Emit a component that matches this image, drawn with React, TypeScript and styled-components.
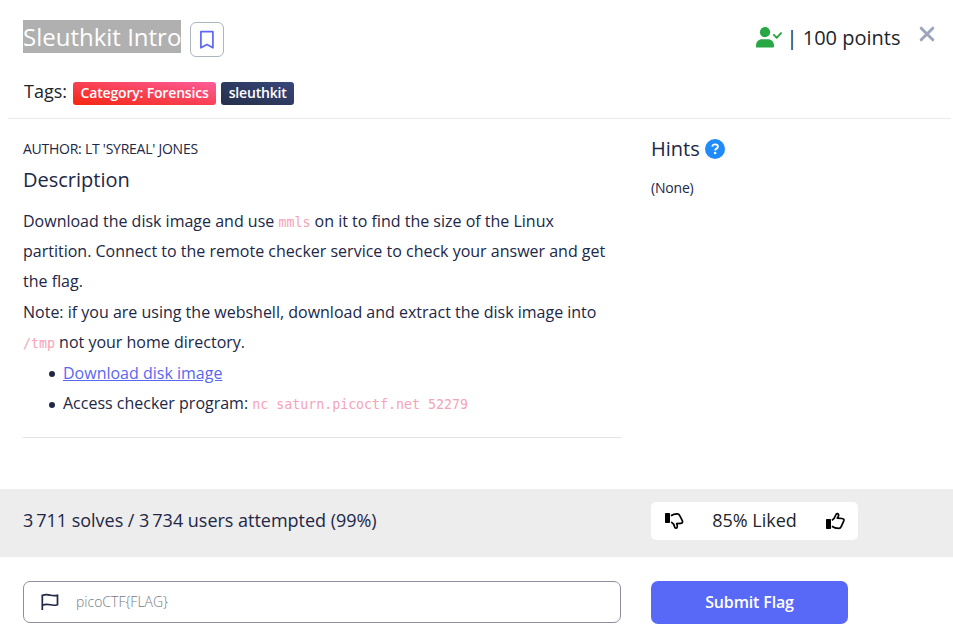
import React from "react";
import styled, { createGlobalStyle } from "styled-components";

const GlobalStyle = createGlobalStyle`
  *, *::before, *::after { box-sizing: border-box; }
  body {
    margin: 0;
    background: #fff;
    color: #212746;
    font-family: "Open Sans", "Noto Sans", sans-serif;
    font-size: 16px;
    overflow: hidden;
  }
`;

const Dialog = styled.main`
  width: 953px;
  height: 638px;
  display: flex;
  flex-direction: column;
`;

const Header = styled.header`
  height: 119px;
  margin: 0 2px 0 8px;
  padding: 20px 16.5px 0 15px;
  border-bottom: 1px solid #e9ecef;
  color: #212529;
`;

const TitleRow = styled.div`
  display: flex;
  align-items: flex-start;
  height: 62px;
`;

const Title = styled.h1`
  margin: 0;
  height: 33px;
  font-size: 24px;
  line-height: 33px;
  font-weight: 400;
  color: #fff;
  background: #b0b0b0;
  white-space: nowrap;
`;

const BookmarkButton = styled.button`
  display: flex;
  align-items: center;
  justify-content: center;
  width: 34px;
  height: 35px;
  margin: 2px 0 0 9px;
  padding: 0;
  border: 1px solid #adb5bd;
  border-radius: 6px;
  background: #fff;
`;

const Points = styled.div`
  display: flex;
  margin-left: auto;
  font-size: 20px;
  line-height: 35px;
  white-space: pre;

  svg { margin: 6px 4.5px 0 0; }
`;

const CloseButton = styled.button`
  display: flex;
  margin: 6px 0 0 18px;
  padding: 0;
  border: 0;
  background: none;
`;

const TagRow = styled.div`
  display: flex;
  align-items: flex-start;
  height: 23px;
`;

const TagLabel = styled.span`
  width: 50px;
  padding-left: 1px;
  font-size: 18px;
  line-height: 19px;
`;

const Tag = styled.span<{ $tone: "red" | "navy" }>`
  height: 23px;
  margin-right: 5px;
  padding: 0 7.5px;
  border-radius: 3px;
  font-size: 14px;
  line-height: 22px;
  letter-spacing: -0.17px;
  font-weight: 600;
  color: #fff;
  white-space: nowrap;
  background: ${({ $tone }) =>
    $tone === "red"
      ? "linear-gradient(to top right, #f5260f, #fc5c9a)"
      : "linear-gradient(to top right, #262e48, #36477a)"};
`;

const Body = styled.section`
  display: grid;
  grid-template-columns: 598px 1fr;
  column-gap: 30px;
  height: 370px;
  padding: 19px 23px 0 23px;
`;

const Details = styled.article`
  height: 300px;
  border-bottom: 1px solid #e3e4e6;
`;

const Author = styled.h6`
  margin: 0;
  font-size: 14px;
  line-height: 22px;
  letter-spacing: -0.25px;
  font-weight: 400;
`;

const SectionTitle = styled.h2`
  display: flex;
  align-items: center;
  gap: 5px;
  margin: 0;
  font-size: 20px;
  line-height: 24px;
  font-weight: 400;
`;

const DescriptionTitle = styled(SectionTitle)`
  margin-top: 8px;
`;

const HintsTitle = styled(SectionTitle)`
  margin-top: -1px;
`;

const Paragraph = styled.p`
  margin: 0;
  line-height: 30.4px;

  ${DescriptionTitle} + & { margin-top: 13.65px; }
`;

const Code = styled.code`
  font-family: "DejaVu Sans Mono", monospace;
  font-size: 13.28px;
  line-height: 1;
  color: #f5a3b7;
`;

const List = styled.ul`
  margin: 0;
  padding-left: 40px;
  line-height: 30.4px;
  list-style: none;
`;

const ListItem = styled.li`
  &::before {
    content: "";
    display: inline-block;
    width: 6px;
    height: 6px;
    margin: 0 8px 0 -14px;
    border-radius: 50%;
    background: currentColor;
    vertical-align: 1.5px;
  }
`;

const Link = styled.a`
  color: #5a67f2;
  text-decoration: underline;
`;

const HintText = styled.p`
  margin: 16px 0 0;
  font-size: 14px;
  line-height: 22px;
  letter-spacing: -0.2px;
`;

const StatsBar = styled.section`
  display: flex;
  align-items: center;
  height: 68px;
  padding: 0 23px;
  background: #ededed;
`;

const Solves = styled.div`
  width: 628px;
  margin-top: -6px;
  font-size: 18px;
  letter-spacing: -0.02px;
  white-space: nowrap;
`;

const Rating = styled.div`
  display: flex;
  align-items: center;
  justify-content: space-between;
  width: 207px;
  height: 38px;
  margin-top: -4px;
  padding: 0 13px;
  border-radius: 5px;
  background: #fff;
  color: #212529;
  font-size: 18px;

  span { margin-top: -2px; }
`;

const Form = styled.form`
  display: flex;
  gap: 30px;
  padding: 24px 23px 0;
`;

const Field = styled.label`
  display: flex;
  align-items: center;
  width: 598px;
  height: 42px;
  padding-left: 17px;
  border: 1px solid #8d8fa1;
  border-radius: 7px;
`;

const FlagInput = styled.input`
  flex: 1;
  min-width: 0;
  margin: 0 12px 0 17px;
  padding: 0;
  border: 0;
  outline: 0;
  background: none;
  font: 300 14px/22px "Open Sans", sans-serif;
  color: #212746;

  &::placeholder { color: #767985; opacity: 1; }
`;

const SubmitButton = styled.button`
  width: 197px;
  height: 43px;
  padding: 0 0 1px;
  border: 0;
  border-radius: 7px;
  background: #5969f7;
  color: #fff;
  font: 600 16px/24px "Open Sans", sans-serif;
  letter-spacing: -0.15px;
`;

const BookmarkIcon = () => (
  <svg width="16" height="20" viewBox="0 0 16 20" fill="none" stroke="#5a67f7" strokeWidth="1.700" strokeLinejoin="round">
    <path d="M1.900 1.600h12v16.200l-6-3.300-6 3.300z" />
  </svg>
);

const SolvedIcon = () => (
  <svg width="26" height="22" viewBox="0 0 26 22" fill="#28a745">
    <circle cx="9" cy="6.2" r="5.1" />
    <path d="M0 21v-1.5C0 15.6 2.7 13.2 6 13.2h6c3.3 0 6 2.4 6 6.3V20c0 1-.5 1.500-1.400 1.500H1.400C.5 21.500 0 21.400 0 21z" />
    <path d="m17.900 8.900 2.800 2.900 4.300-4.700" fill="none" stroke="#28a745" strokeWidth="1.900" strokeLinecap="round" strokeLinejoin="round" />
  </svg>
);

const CloseIcon = () => (
  <svg width="16" height="16" viewBox="0 0 16 16" stroke="#9da4bd" strokeWidth="3" strokeLinecap="round">
    <path d="m2.200 2.200 11.600 11.600m0-11.600L2.200 13.800" />
  </svg>
);

const HelpIcon = () => (
  <svg width="20" height="20" viewBox="0 0 20 20" fill="none">
    <circle cx="10" cy="10" r="10" fill="#1f8bfa" />
    <path d="M7.300 7.700c.2-1.600 1.200-2.300 2.800-2.300 1.700 0 2.800.9 2.800 2.300 0 2-2.800 1.800-2.800 3.800" stroke="#fff" strokeWidth="1.900" />
    <circle cx="10.100" cy="14.100" r="1.250" fill="#fff" />
  </svg>
);

const ThumbUpIcon = () => (
  <svg width="20" height="18" viewBox="0 0 20 18" fill="none">
    <rect x="1" y="7" width="5" height="10" rx="0.700" fill="#000" />
    <path d="M6.900 8.200C8.600 7.200 10 5.400 10.900 2.700c.5-1.700 3-1.300 2.700.7-.2 1.200-.7 2-1.300 2.700l4.700.4c1.700.2 2.200 1.200 1.800 2.300l-2.500 5.500c-.6 1.400-1.300 2-2.600 2-2.500 0-4.900-.7-6.800-2.100" stroke="#000" strokeWidth="1.700" strokeLinejoin="round" />
  </svg>
);

const ThumbDownIcon = () => (
  <svg width="20" height="18" viewBox="0 0 20 18" fill="none">
    <rect x="1" y="1" width="5" height="10" rx="0.700" fill="#000" />
    <path d="M6.900 3.800C9 2.400 11.300 1.700 13.600 1.900c1.200.1 1.800.8 2.300 1.900l2.500 5.100c.5 1.200 0 2.300-1.500 2.400l-4.300.3c.5.9.8 1.900.7 3.100-.1 1.900-2.400 2-2.700.2-.4-2.300-1.500-3.900-3.400-5" stroke="#000" strokeWidth="1.700" strokeLinejoin="round" />
  </svg>
);

const FlagIcon = () => (
  <svg width="18" height="18" viewBox="0 0 18 18" fill="none" stroke="#212746" strokeWidth="1.700">
    <path d="M1.300 17V1.500M1.300 2.500C5 .8 7.200 1.600 9.500 2.200c2.400.6 4.500.6 7 .1v9.400c-2.600.8-4.700.7-7 .1-2.700-.7-5.400-.7-8.200.4" />
  </svg>
);

export default function App() {
  return (
    <Dialog>
      <GlobalStyle />
      <Header>
        <TitleRow>
          <Title>Sleuthkit Intro</Title>
          <BookmarkButton aria-label="Bookmark"><BookmarkIcon /></BookmarkButton>
          <Points><SolvedIcon />| 100 points</Points>
          <CloseButton aria-label="Close"><CloseIcon /></CloseButton>
        </TitleRow>
        <TagRow>
          <TagLabel>Tags:</TagLabel>
          <Tag $tone="red">Category: Forensics</Tag>
          <Tag $tone="navy">sleuthkit</Tag>
        </TagRow>
      </Header>
      <Body>
        <Details>
          <Author>AUTHOR: LT 'SYREAL' JONES</Author>
          <DescriptionTitle>Description</DescriptionTitle>
          <Paragraph>
            Download the disk image and use <Code>mmls</Code> on it to find the size of the Linux
            partition. Connect to the remote checker service to check your answer and get the flag.
          </Paragraph>
          <Paragraph>
            Note: if you are using the webshell, download and extract the disk image
            into <Code>/tmp</Code> not your home directory.
          </Paragraph>
          <List>
            <ListItem><Link>Download disk image</Link></ListItem>
            <ListItem>Access checker program: <Code>nc saturn.picoctf.net 52279</Code></ListItem>
          </List>
        </Details>
        <aside>
          <HintsTitle>Hints <HelpIcon /></HintsTitle>
          <HintText>(None)</HintText>
        </aside>
      </Body>
      <StatsBar>
        <Solves>3&#8201;711 solves / 3&#8201;734 users attempted (99%)</Solves>
        <Rating><ThumbDownIcon /><span>85% Liked</span><ThumbUpIcon /></Rating>
      </StatsBar>
      <Form>
        <Field>
          <FlagIcon />
          <FlagInput placeholder="picoCTF{FLAG}" />
        </Field>
        <SubmitButton type="button">Submit Flag</SubmitButton>
      </Form>
    </Dialog>
  );
}
